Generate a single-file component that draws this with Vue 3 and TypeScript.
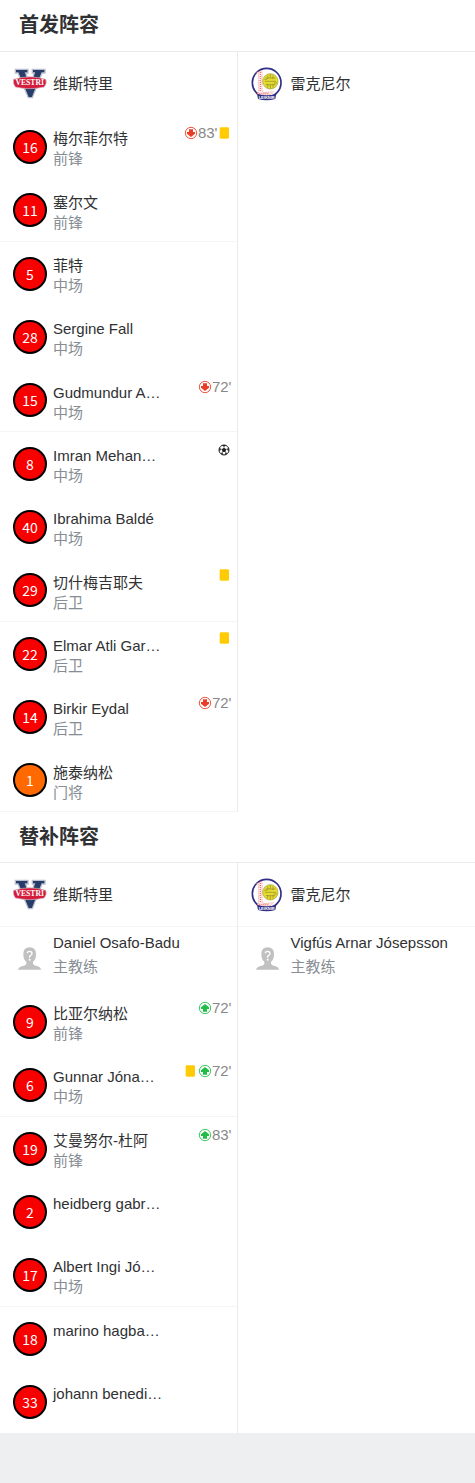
<script setup lang="ts">
type EventKind = 'off' | 'on' | 'yellow' | 'goal'

interface MatchEvent {
  kind: EventKind
  minute?: string
}

interface Player {
  number: number
  name: string
  role?: string
  keeper?: boolean
  events?: MatchEvent[]
}

interface Team {
  name: string
  crest: 'vestri' | 'leiknir'
  coach?: string
  players: Player[]
}

interface Section {
  id: string
  title: string
  teams: Team[]
}

const labels: Record<EventKind, string> = {
  off: '换下',
  on: '换上',
  yellow: '黄牌',
  goal: '进球',
}

const onlyCards = (events: MatchEvent[]): boolean => events.every((event) => event.kind === 'yellow')

const sections: Section[] = [
  {
    id: 'starters',
    title: '首发阵容',
    teams: [
      {
        name: '维斯特里',
        crest: 'vestri',
        players: [
          { number: 16, name: '梅尔菲尔特', role: '前锋', events: [{ kind: 'off', minute: "83'" }, { kind: 'yellow' }] },
          { number: 11, name: '塞尔文', role: '前锋' },
          { number: 5, name: '菲特', role: '中场' },
          { number: 28, name: 'Sergine Fall', role: '中场' },
          { number: 15, name: 'Gudmundur A…', role: '中场', events: [{ kind: 'off', minute: "72'" }] },
          { number: 8, name: 'Imran Mehan…', role: '中场', events: [{ kind: 'goal' }] },
          { number: 40, name: 'Ibrahima Baldé', role: '中场' },
          { number: 29, name: '切什梅吉耶夫', role: '后卫', events: [{ kind: 'yellow' }] },
          { number: 22, name: 'Elmar Atli Gar…', role: '后卫', events: [{ kind: 'yellow' }] },
          { number: 14, name: 'Birkir Eydal', role: '后卫', events: [{ kind: 'off', minute: "72'" }] },
          { number: 1, name: '施泰纳松', role: '门将', keeper: true },
        ],
      },
      { name: '雷克尼尔', crest: 'leiknir', players: [] },
    ],
  },
  {
    id: 'bench',
    title: '替补阵容',
    teams: [
      {
        name: '维斯特里',
        crest: 'vestri',
        coach: 'Daniel Osafo-Badu',
        players: [
          { number: 9, name: '比亚尔纳松', role: '前锋', events: [{ kind: 'on', minute: "72'" }] },
          { number: 6, name: 'Gunnar Jóna…', role: '中场', events: [{ kind: 'yellow' }, { kind: 'on', minute: "72'" }] },
          { number: 19, name: '艾曼努尔-杜阿', role: '前锋', events: [{ kind: 'on', minute: "83'" }] },
          { number: 2, name: 'heidberg gabr…' },
          { number: 17, name: 'Albert Ingi Jó…', role: '中场' },
          { number: 18, name: 'marino hagba…' },
          { number: 33, name: 'johann benedi…' },
        ],
      },
      { name: '雷克尼尔', crest: 'leiknir', coach: 'Vigfús Arnar Jósepsson', players: [] },
    ],
  },
]
</script>

<template>
  <main class="lineups">
    <section v-for="section in sections" :key="section.id" class="section" :class="section.id">
      <h2 class="title">{{ section.title }}</h2>
      <div class="teams">
        <div v-for="team in section.teams" :key="team.name" class="team">
          <header class="team-head">
            <svg v-if="team.crest === 'vestri'" class="crest" viewBox="0 0 102 102" aria-hidden="true">
              <path d="M7 7H45V18H38L51 56L64 18H58V7H96V18H87L58 92H46L15 18H7Z" fill="#273c68" stroke="#b9bfce" stroke-width="4" />
              <path d="M2 37Q50 22 98 37Q103 48 94 60Q50 70 7 60Q-2 48 2 37Z" fill="#d51c3b" stroke="#d1bac7" stroke-width="2" />
              <text x="50" y="55" text-anchor="middle" class="vestri-text">VESTRI</text>
            </svg>
            <svg v-else class="crest" viewBox="0 0 102 102" aria-hidden="true">
              <circle cx="47" cy="47" r="43" fill="#fff" stroke="#302f87" stroke-width="5" />
              <path d="M17 17L33 10V68Q34 76 42 77L67 74L60 83H17L23 75V19Z" fill="#fff3f2" stroke="#f28c88" stroke-width="2" stroke-dasharray="5 2" />
              <path d="M28 15V73M19 79H54" stroke="#f0706d" stroke-width="4" stroke-dasharray="3 3" />
              <circle cx="58" cy="43" r="23" fill="#e4dc2c" stroke="#a39e35" stroke-width="2" />
              <path d="M58 21V33M58 53V65M44 33H73M42 43H75M44 53H73M50 25V36M66 25V36M50 51V62M66 51V62M40 37H48M68 48H78" fill="none" stroke="#8f8a35" stroke-width="2" />
              <path d="M18 80Q47 90 76 80L73 96Q47 104 21 96Z" fill="#302f87" />
              <text x="47" y="97" text-anchor="middle" class="leiknir-text">LEIKNIR</text>
            </svg>
            <h3 class="team-name">{{ team.name }}</h3>
          </header>

          <div v-if="team.coach" class="coach">
            <svg class="crest" viewBox="0 0 102 102" aria-hidden="true">
              <path d="M15 83Q18 74 29 72Q39 70 40 65V59Q31 53 31 36Q31 16 50 16Q69 16 69 36Q69 53 60 59V65Q62 70 72 72Q82 74 85 83Z" fill="#c1c1c1" />
              <path d="M43 34Q43 28 50 28Q57 28 57 35Q57 39 50 42V47" fill="none" stroke="#fff" stroke-width="4" />
              <circle cx="50" cy="53" r="3" fill="#fff" />
            </svg>
            <div class="info">
              <span class="name">{{ team.coach }}</span>
              <span class="role">主教练</span>
            </div>
          </div>

          <ul v-if="team.players.length" class="players">
            <li v-for="player in team.players" :key="player.number" class="player">
              <span class="number" :class="{ keeper: player.keeper }">{{ player.number }}</span>
              <div class="info">
                <span class="name">{{ player.name }}</span>
                <span v-if="player.role" class="role">{{ player.role }}</span>
              </div>
              <div v-if="player.events" class="events" :class="{ cards: onlyCards(player.events) }">
                <template v-for="event in player.events" :key="event.kind">
                  <svg class="event-icon" viewBox="0 0 42 42" role="img" :aria-label="labels[event.kind]">
                    <rect v-if="event.kind === 'yellow'" x="5" y="4" width="28" height="34" rx="4" fill="#ffcb05" />
                    <g v-else-if="event.kind === 'off'">
                      <circle cx="21" cy="21" r="17" fill="#fff" stroke="#ed5542" stroke-width="3" />
                      <path d="M15 10H27V18H33V23L21 33L9 23V18H15Z" fill="#ea3d28" />
                    </g>
                    <g v-else-if="event.kind === 'on'">
                      <circle cx="21" cy="21" r="17" fill="#fff" stroke="#3dca60" stroke-width="3" />
                      <path d="M15 32H27V24H33V19L21 9L9 19V24H15Z" fill="#20bd48" />
                    </g>
                    <g v-else transform="translate(-3 0)">
                      <circle cx="21" cy="21" r="15" fill="#fff" stroke="#222" stroke-width="3" />
                      <path d="M21 14L28 19L25 27H17L14 19ZM14 6H28L21 11ZM6 15L12 18L8 26ZM36 15L30 18L34 26ZM12 33L15 28L20 36ZM30 33L27 28L22 36Z" fill="#222" />
                      <path d="M21 14V9M28 19L32 17M25 27L28 31M17 27L14 31M14 19L10 17" stroke="#222" stroke-width="2" />
                    </g>
                  </svg>
                  <span v-if="event.minute">{{ event.minute }}</span>
                </template>
              </div>
            </li>
          </ul>
        </div>
      </div>
    </section>
  </main>
</template>

<style>
body {
  margin: 0;
  background: #edeff1;
}
</style>

<style scoped>
.lineups {
  background: #fff;
  color: #303133;
  font-family: "Liberation Sans", "Noto Sans CJK SC", sans-serif;
  font-size: 15px;
}

.title {
  box-sizing: border-box;
  height: 52px;
  margin: 0;
  padding: 0 19px;
  border-bottom: 1px solid #ebebeb;
  font-size: 20px;
  line-height: 50px;
}

.bench .title {
  height: 51px;
}

.teams {
  display: grid;
  grid-template-columns: 1fr 1fr;
}

.team {
  min-width: 0;
}

.team:first-child {
  border-right: 1px solid #ebebeb;
}

.team-head,
.coach,
.player {
  display: flex;
  gap: 6px;
  min-height: 63px;
  padding: 0 5px 0 13px;
}

.team-head {
  align-items: center;
}

.bench .team-head {
  border-bottom: 1px solid #f5f5f5;
}

.crest {
  flex: none;
  align-self: center;
  width: 34px;
  height: 34px;
}

.vestri-text {
  fill: #fff;
  font-family: "Liberation Serif", serif;
  font-size: 23px;
  font-weight: bold;
}

.leiknir-text {
  fill: #fff;
  font-size: 12px;
  font-weight: bold;
}

.team-name {
  margin: 0;
  font-size: 15px;
  font-weight: normal;
  line-height: 20px;
}

.players {
  margin: 0;
  padding: 0;
  list-style: none;
}

.starters .player:nth-child(3n + 1) {
  min-height: 64px;
}

.starters .player:nth-child(3n + 2) {
  min-height: 62px;
}

.player:nth-child(3n + 2) {
  border-bottom: 1px solid #f5f5f5;
}

.number {
  box-sizing: border-box;
  flex: none;
  align-self: center;
  width: 34px;
  height: 34px;
  border: 2px solid #000;
  border-radius: 50%;
  background: #f80000;
  color: #fff;
  font-family: "Noto Sans CJK SC", sans-serif;
  font-size: 14px;
  line-height: 30px;
  text-align: center;
}

.number.keeper {
  background: #ff6900;
}

.info {
  display: flex;
  flex: 1;
  flex-direction: column;
  min-width: 0;
  padding-top: 14px;
  line-height: 20px;
  white-space: nowrap;
}

.coach .info {
  padding-top: 4px;
  line-height: 24px;
}

.role {
  color: #878d94;
}

.events {
  display: flex;
  align-items: center;
  height: 20px;
  padding-top: 8px;
  color: #888;
  line-height: 20px;
}

.events.cards {
  padding-top: 6px;
}

.event-icon {
  flex: none;
  width: 14px;
  height: 14px;
}
</style>
